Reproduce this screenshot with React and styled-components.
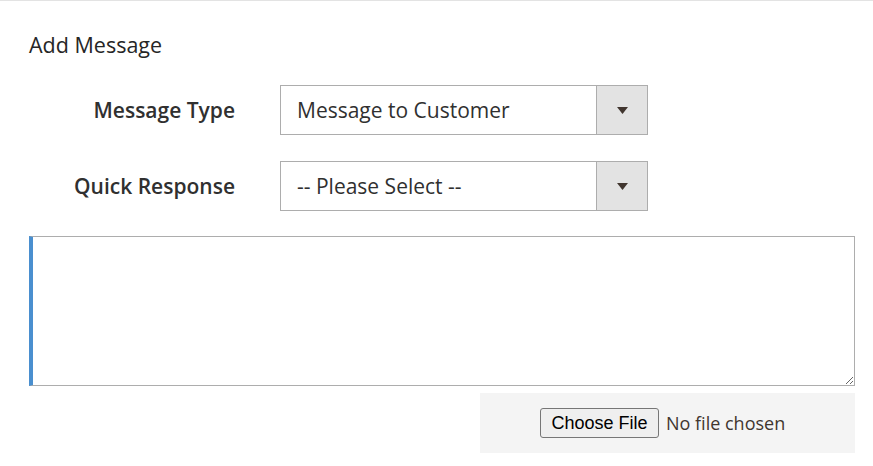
import React from "react";
import styled, { createGlobalStyle } from "styled-components";

const Global = createGlobalStyle`
  html, body { margin: 0; padding: 0; background: #ffffff; }
  body { font-family: "Open Sans", "Noto Sans", sans-serif; color: #303030; }
  * { box-sizing: border-box; }
`;

const Page = styled.div`
  width: 873px;
  min-height: 466px;
  border-top: 1px solid #e3e3e3;
  padding: 29px 18px 0 29px;
`;

const Heading = styled.h2`
  margin: 0 0 26px 0;
  font-size: 21.5px;
  font-weight: 400;
  line-height: 29px;
  color: #262626;
`;

const Row = styled.div`
  display: grid;
  grid-template-columns: 206px 368px;
  column-gap: 45px;
  align-items: center;
  height: 50px;
  margin-bottom: ${(p) => p.$gap || 0}px;
`;

const Label = styled.label`
  text-align: right;
  font-size: 21px;
  font-weight: 600;
  color: #303030;
`;

const SelectBox = styled.div`
  display: flex;
  height: 50px;
  border: 1px solid #adadad;
  background: #ffffff;
`;

const NativeSelect = styled.select`
  flex: 1;
  appearance: none;
  -webkit-appearance: none;
  border: 0;
  outline: 0;
  background: transparent;
  padding: 0 0 0 16px;
  font-family: "Open Sans", sans-serif;
  font-size: 21px;
  color: #303030;
`;

const ArrowBox = styled.div`
  width: 51px;
  display: flex;
  align-items: center;
  justify-content: center;
  background: #e3e3e3;
  border-left: 1px solid #adadad;
  pointer-events: none;
`;

const Editor = styled.textarea`
  display: block;
  width: 826px;
  height: 150px;
  margin: 0;
  border: 1px solid #adadad;
  border-left: 4px solid #4a8fcf;
  border-radius: 0;
  padding: 8px 12px;
  font-family: "Open Sans", sans-serif;
  font-size: 18px;
  color: #303030;
  outline: 0;
  resize: both;
`;

const FileBar = styled.div`
  width: 375px;
  height: 60px;
  margin: 7px 0 0 auto;
  background: #f4f4f4;
  display: flex;
  align-items: center;
  padding-left: 60px;
  gap: 7px;
`;

const ChooseButton = styled.button`
  height: 30px;
  width: 119px;
  padding: 0;
  border: 1px solid #767676;
  border-radius: 3px;
  background: #efefef;
  font-family: "Liberation Sans", Arial, sans-serif;
  font-size: 18px;
  color: #000000;
`;

const FileText = styled.span`
  font-family: "Open Sans", sans-serif;
  font-size: 18px;
  color: #41362f;
`;

const Arrow = () => (
  <svg width="11" height="7" viewBox="0 0 11 7">
    <path d="M0 0 H11 L5.5 7 Z" fill="#41362f" />
  </svg>
);

const SelectField = ({ value, options }) => (
  <SelectBox>
    <NativeSelect defaultValue={value}>
      {options.map((o) => (
        <option key={o}>{o}</option>
      ))}
    </NativeSelect>
    <ArrowBox>
      <Arrow />
    </ArrowBox>
  </SelectBox>
);

export default function App() {
  return (
    <>
      <Global />
      <Page>
        <Heading>Add Message</Heading>
        <Row $gap={26}>
          <Label>Message Type</Label>
          <SelectField value="Message to Customer" options={["Message to Customer", "Internal Note"]} />
        </Row>
        <Row $gap={25}>
          <Label>Quick Response</Label>
          <SelectField value="-- Please Select --" options={["-- Please Select --"]} />
        </Row>
        <Editor />
        <FileBar>
          <ChooseButton type="button">Choose File</ChooseButton>
          <FileText>No file chosen</FileText>
        </FileBar>
      </Page>
    </>
  );
}
